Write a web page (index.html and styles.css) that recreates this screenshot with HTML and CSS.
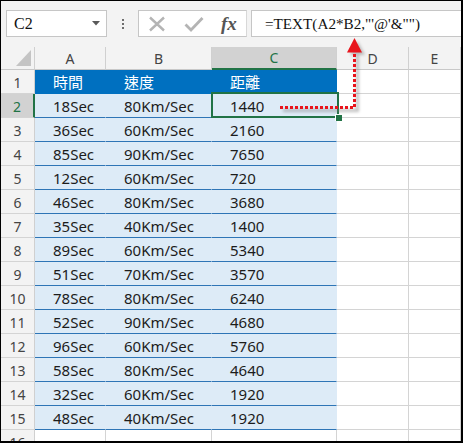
FILE: index.html
```html
<!DOCTYPE html>
<html>
<head>
<meta charset="utf-8">
<link rel="stylesheet" href="styles.css">
</head>
<body>
<div class="frame">
  <div class="toolbar">
    <div class="namebox">
      <span class="nb-text">C2</span>
      <svg class="nb-caret" width="8" height="5" viewBox="0 0 8 5"><path d="M0 0H8L4 4.5Z" fill="#5a5a5a"/></svg>
    </div>
    <div class="dots"><i></i><i></i><i></i></div>
    <div class="fxbox">
      <svg class="ico" width="18" height="16" viewBox="0 0 18 16"><path d="M2 1.5L16 14.5M16 1.5L2 14.5" stroke="#b4b4b4" stroke-width="2.4" fill="none"/></svg>
      <svg class="ico" width="20" height="16" viewBox="0 0 20 16"><path d="M1.5 8.5L7 14L18.5 2" stroke="#b4b4b4" stroke-width="2.8" fill="none"/></svg>
      <span class="fx">fx</span>
    </div>
    <div class="formula">=TEXT(A2*B2,"'@'&amp;"")</div>
  </div>
  <div class="sheet">
    <div class="corner"><svg width="15" height="16" viewBox="0 0 15 16"><path d="M15 0V16H0Z" fill="#c4c4c4"/></svg></div>
    <div class="ch">A</div><div class="ch">B</div><div class="ch sel-h">C</div><div class="ch">D</div><div class="ch">E</div>

    <div class="rh">1</div><div class="c th">時間</div><div class="c th">速度</div><div class="c th">距離</div><div class="c"></div><div class="c"></div>
    <div class="rh sel-r">2</div><div class="c t">18Sec</div><div class="c t">80Km/Sec</div><div class="c t">1440</div><div class="c"></div><div class="c"></div>
    <div class="rh">3</div><div class="c t">36Sec</div><div class="c t">60Km/Sec</div><div class="c t">2160</div><div class="c"></div><div class="c"></div>
    <div class="rh">4</div><div class="c t">85Sec</div><div class="c t">90Km/Sec</div><div class="c t">7650</div><div class="c"></div><div class="c"></div>
    <div class="rh">5</div><div class="c t">12Sec</div><div class="c t">60Km/Sec</div><div class="c t">720</div><div class="c"></div><div class="c"></div>
    <div class="rh">6</div><div class="c t">46Sec</div><div class="c t">80Km/Sec</div><div class="c t">3680</div><div class="c"></div><div class="c"></div>
    <div class="rh">7</div><div class="c t">35Sec</div><div class="c t">40Km/Sec</div><div class="c t">1400</div><div class="c"></div><div class="c"></div>
    <div class="rh">8</div><div class="c t">89Sec</div><div class="c t">60Km/Sec</div><div class="c t">5340</div><div class="c"></div><div class="c"></div>
    <div class="rh">9</div><div class="c t">51Sec</div><div class="c t">70Km/Sec</div><div class="c t">3570</div><div class="c"></div><div class="c"></div>
    <div class="rh">10</div><div class="c t">78Sec</div><div class="c t">80Km/Sec</div><div class="c t">6240</div><div class="c"></div><div class="c"></div>
    <div class="rh">11</div><div class="c t">52Sec</div><div class="c t">90Km/Sec</div><div class="c t">4680</div><div class="c"></div><div class="c"></div>
    <div class="rh">12</div><div class="c t">96Sec</div><div class="c t">60Km/Sec</div><div class="c t">5760</div><div class="c"></div><div class="c"></div>
    <div class="rh">13</div><div class="c t">58Sec</div><div class="c t">80Km/Sec</div><div class="c t">4640</div><div class="c"></div><div class="c"></div>
    <div class="rh">14</div><div class="c t">32Sec</div><div class="c t">60Km/Sec</div><div class="c t">1920</div><div class="c"></div><div class="c"></div>
    <div class="rh">15</div><div class="c t">48Sec</div><div class="c t">40Km/Sec</div><div class="c t">1920</div><div class="c"></div><div class="c"></div>
    <div class="rh">16</div><div class="c"></div><div class="c"></div><div class="c"></div><div class="c"></div><div class="c"></div>

    <div class="selbox"><span class="handle"></span></div>
  </div>
  <svg class="arrow" width="463" height="443" viewBox="0 0 463 443">
    <defs>
      <filter id="sh" x="-20%" y="-20%" width="140%" height="140%">
        <feGaussianBlur stdDeviation="1.6"/>
      </filter>
    </defs>
    <g opacity="0.45" filter="url(#sh)" transform="translate(3,3)">
      <path d="M280 107.5H354.5V50" stroke="#777" stroke-width="3" fill="none"/>
      <path d="M354.5 38L362 52H347Z" fill="#777"/>
    </g>
    <path d="M280 107.5H354.5V51" stroke="#e8141c" stroke-width="3" stroke-dasharray="3 2" fill="none"/>
    <path d="M354.5 38L362 52.5H347Z" fill="#e8141c"/>
  </svg>
</div>
</body>
</html>
```

FILE: styles.css
```css
html, body {
  margin: 0;
  padding: 0;
  background: #fff;
}

.frame {
  position: relative;
  width: 463px;
  height: 443px;
  box-sizing: border-box;
  border-style: solid;
  border-color: #000;
  border-width: 1px 2px 2px 1px;
  overflow: hidden;
  background: #fff;
  font-family: "Noto Sans", "Noto Sans CJK TC", sans-serif;
}

.toolbar {
  height: 46px;
  box-sizing: border-box;
  background: #f3f3f3;
  display: flex;
  align-items: flex-start;
  padding-top: 9px;
  padding-left: 5px;
}

.namebox {
  width: 101px;
  height: 27px;
  box-sizing: border-box;
  border: 1px solid #c6c6c6;
  background: #fff;
  display: flex;
  align-items: center;
  justify-content: space-between;
  padding: 0 6px 0 7px;
}

.nb-text {
  font-family: "Liberation Serif", serif;
  font-size: 16px;
  color: #111;
}

.dots {
  width: 31px;
  height: 27px;
  display: flex;
  flex-direction: column;
  align-items: center;
  justify-content: center;
  gap: 2px;
}

.dots i {
  display: block;
  width: 2px;
  height: 2px;
  background: #6e6e6e;
}

.fxbox {
  width: 109px;
  height: 27px;
  box-sizing: border-box;
  border: 1px solid #c6c6c6;
  border-right: 1px solid #d8d8d8;
  background: #fff;
  display: flex;
  align-items: center;
  padding-left: 9px;
  gap: 18px;
}

.fx {
  font-family: "Liberation Serif", serif;
  font-style: italic;
  font-weight: bold;
  font-size: 19px;
  color: #555;
  margin-left: -1px;
}

.formula {
  margin-left: 4px;
  flex: 1;
  height: 27px;
  box-sizing: border-box;
  border: 1px solid #c6c6c6;
  border-right: none;
  background: #fff;
  display: flex;
  align-items: center;
  padding-left: 13px;
  font-family: "Liberation Serif", serif;
  font-size: 15.2px;
  color: #111;
  white-space: nowrap;
}

.sheet {
  position: relative;
  display: grid;
  grid-template-columns: 34px 71px 106px 125px 72px 52px;
  grid-template-rows: 23px repeat(16, 24px);
}

.corner {
  background: #f3f3f3;
  border-right: 1px solid #d0d0d0;
  border-bottom: 1px solid #c8c8c8;
  display: flex;
  align-items: flex-end;
  justify-content: flex-end;
  padding: 0 3px 3px 0;
}

.ch {
  background: #f3f3f3;
  border-right: 1px solid #d0d0d0;
  border-bottom: 1px solid #c8c8c8;
  display: flex;
  align-items: center;
  justify-content: center;
  font-size: 14px;
  color: #444;
}

.ch.sel-h {
  background: #d2d2d2;
  border-bottom: 2px solid #217346;
  color: #217346;
}

.rh {
  background: #f3f3f3;
  border-right: 1px solid #d0d0d0;
  border-bottom: 1px solid #d4d4d4;
  display: flex;
  align-items: center;
  justify-content: center;
  font-size: 14px;
  color: #444;
  padding-top: 1px;
}

.rh.sel-r {
  background: #d2d2d2;
  border-right: 2px solid #217346;
  color: #217346;
}

.c {
  box-sizing: border-box;
  border-right: 1px solid #d4d4d4;
  border-bottom: 1px solid #d4d4d4;
  display: flex;
  align-items: center;
  padding-left: 18px;
  font-size: 15px;
  color: #1c1c1c;
  white-space: nowrap;
}

.c.th {
  background: #0070c0;
  color: #fff;
  border-right-color: transparent;
  border-bottom-color: #0070c0;
  font-family: "Noto Sans CJK TC", sans-serif;
}

.c.t {
  background: #ddebf7;
  border-right-color: transparent;
  border-bottom-color: #2e75b6;
}

.selbox {
  position: absolute;
  left: 210px;
  top: 45px;
  width: 128px;
  height: 26px;
  box-sizing: border-box;
  border: 2px solid #217346;
}

.handle {
  position: absolute;
  right: -5px;
  bottom: -5px;
  width: 6px;
  height: 6px;
  background: #217346;
  border: 1px solid #fff;
  border-width: 1px 0 0 1px;
}

.arrow {
  position: absolute;
  left: -1px;
  top: -1px;
  pointer-events: none;
}
```
